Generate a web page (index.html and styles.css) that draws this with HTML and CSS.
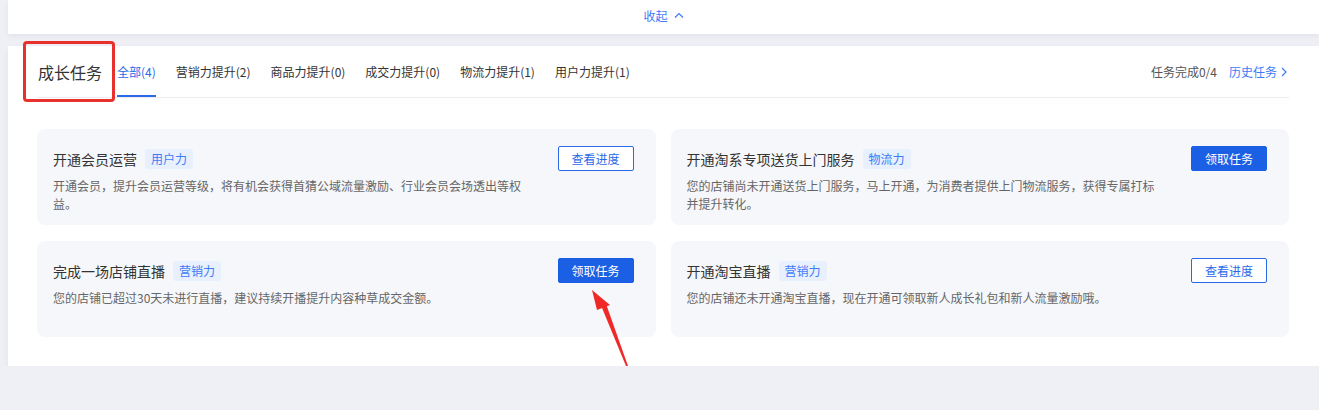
FILE: index.html
```html
<!DOCTYPE html>
<html lang="zh-CN">
<head>
    <meta charset="UTF-8">
    <meta name="viewport" content="width=device-width, initial-scale=1.0">
    <title>成长任务</title>
    <link rel="stylesheet" href="styles.css">
</head>
<body>
    <div class="page">
        <div class="collapse-bar">
            <a class="collapse-link">收起
                <svg width="10" height="6" viewBox="0 0 10 6"><path d="M1 5.5L5 1.5L9 5.5" fill="none" stroke="#3d7bf7" stroke-width="1.2"/></svg>
            </a>
        </div>

        <div class="panel">
            <div class="panel-header">
                <h2 class="panel-title">成长任务</h2>
                <div class="tabs">
                    <span class="tab active">全部(4)</span>
                    <span class="tab">营销力提升(2)</span>
                    <span class="tab">商品力提升(0)</span>
                    <span class="tab">成交力提升(0)</span>
                    <span class="tab">物流力提升(1)</span>
                    <span class="tab">用户力提升(1)</span>
                </div>
                <div class="header-right">
                    <span class="progress">任务完成0/4</span>
                    <a class="history">历史任务
                        <svg width="6" height="10" viewBox="0 0 6 10"><path d="M1 1L5 5L1 9" fill="none" stroke="#3d7bf7" stroke-width="1.2"/></svg>
                    </a>
                </div>
            </div>

            <div class="task-grid">
                <div class="task-card">
                    <div class="task-body">
                        <div class="task-head"><span class="task-name">开通会员运营</span><span class="tag">用户力</span></div>
                        <p class="task-desc">开通会员，提升会员运营等级，将有机会获得首猜公域流量激励、行业会员会场透出等权益。</p>
                    </div>
                    <button class="btn btn-outline">查看进度</button>
                </div>
                <div class="task-card">
                    <div class="task-body">
                        <div class="task-head"><span class="task-name">开通淘系专项送货上门服务</span><span class="tag">物流力</span></div>
                        <p class="task-desc">您的店铺尚未开通送货上门服务，马上开通，为消费者提供上门物流服务，获得专属打标并提升转化。</p>
                    </div>
                    <button class="btn btn-primary">领取任务</button>
                </div>
                <div class="task-card">
                    <div class="task-body">
                        <div class="task-head"><span class="task-name">完成一场店铺直播</span><span class="tag">营销力</span></div>
                        <p class="task-desc">您的店铺已超过30天未进行直播，建议持续开播提升内容种草成交金额。</p>
                    </div>
                    <button class="btn btn-primary">领取任务</button>
                </div>
                <div class="task-card">
                    <div class="task-body">
                        <div class="task-head"><span class="task-name">开通淘宝直播</span><span class="tag">营销力</span></div>
                        <p class="task-desc">您的店铺还未开通淘宝直播，现在开通可领取新人成长礼包和新人流量激励哦。</p>
                    </div>
                    <button class="btn btn-outline">查看进度</button>
                </div>
            </div>
        </div>
    </div>

    <!-- annotations drawn over the screenshot -->
    <div class="mark-box"></div>
    <svg class="mark-arrow" width="60" height="90" viewBox="0 0 60 90">
        <path d="M44 83 L18 20 L23 18 L46 83 Z" fill="#f02828"/>
        <path d="M10 7 L28 22 L15 27 Z" fill="#f02828"/>
    </svg>
</body>
</html>
```

FILE: styles.css
```css
body { margin: 0; background-color: #eef0f5; font-family: "Noto Sans CJK SC", "Noto Sans", sans-serif; color: #333; }
.page { padding-left: 8px; }

.collapse-bar { height: 34px; background: #fff; display: flex; align-items: center; justify-content: center; box-shadow: 0 2px 6px rgba(0, 0, 0, 0.06); }
.collapse-link { font-size: 12px; color: #3d7bf7; display: flex; align-items: center; gap: 6px; margin-bottom: 4px; }

.panel { margin-top: 12px; height: 320px; background: #fff; padding: 0 30px 0 29px; box-shadow: 0 3px 8px rgba(0, 0, 0, 0.06); }
.panel-header { height: 51px; display: flex; align-items: center; border-bottom: 1px solid #ececf0; }
.panel-title { margin: 0 15px 0 1px; font-size: 16px; font-weight: normal; color: #333; }
.tabs { display: flex; gap: 20px; height: 100%; }
.tab { font-size: 12px; color: #333; display: flex; align-items: center; height: 100%; box-sizing: border-box; border-bottom: 2px solid transparent; padding-top: 2px; }
.tab.active { color: #2a6ae9; border-bottom-color: #2a6ae9; }
.header-right { margin-left: auto; display: flex; align-items: center; gap: 12px; font-size: 12px; margin-right: 2px; }
.progress { color: #555; }
.history { color: #3d7bf7; display: flex; align-items: center; gap: 4px; }

.task-grid { display: grid; grid-template-columns: 1fr 1fr; gap: 16px 15px; padding-top: 31px; }
.task-card { height: 96px; box-sizing: border-box; background: #f6f7fa; border-radius: 8px; padding: 17px 22px 0 16px; display: flex; align-items: flex-start; justify-content: space-between; }
.task-head { display: flex; align-items: center; height: 25px; }
.task-name { font-size: 14px; color: #333; }
.tag { margin-left: 8px; height: 20px; line-height: 20px; padding: 0 6px; font-size: 12px; color: #3d7bf7; background: #e8f0fe; border-radius: 3px; }
.task-desc { margin: 6px 0 0; width: 472px; font-size: 12px; line-height: 18px; color: #666; }

.btn { width: 76px; height: 25px; font-family: inherit; font-size: 12px; border-radius: 2px; cursor: pointer; padding: 0; }
.btn-outline { background: #fff; color: #2a6ae9; border: 1px solid #2a6ae9; }
.btn-primary { background: #1b5fe4; color: #fff; border: 1px solid #1b5fe4; }

.mark-box { position: absolute; left: 23px; top: 41px; width: 86px; height: 55px; border: 3px solid #e8302c; border-radius: 4px; }
.mark-arrow { position: absolute; left: 582px; top: 283px; }
```
